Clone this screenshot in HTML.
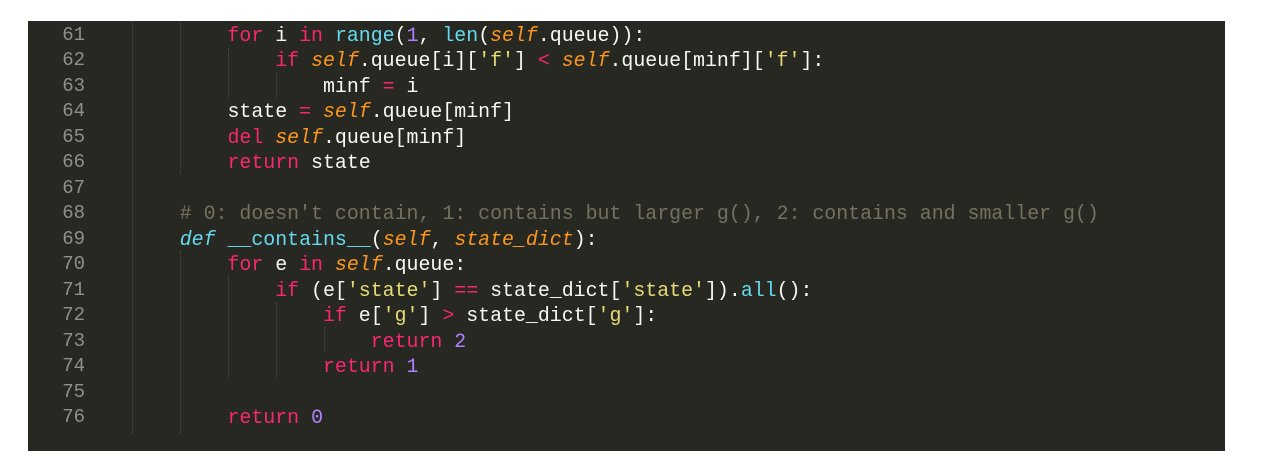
<!DOCTYPE html>
<html><head><meta charset="utf-8"><style>
body{margin:0;background:#fff;width:1270px;height:468px;overflow:hidden;position:relative}
#p{position:absolute;left:28px;top:21px;width:1197px;height:430px;background:#272822}
.l{position:absolute;left:0;height:25px;line-height:25px;font-family:"Liberation Mono",monospace;font-size:19.9px;color:#f8f8f2;white-space:pre}
.n{position:absolute;width:57px;text-align:right;color:#8f908a;font-family:"Liberation Mono",monospace;font-size:19px;line-height:25px}
.c{position:absolute;left:104px}
.k{color:#f92672}.b{color:#66d9ef}.s{color:#fd971f;font-style:italic}.m{color:#ae81ff}.q{color:#e6db74}.cm{color:#75715e}.d{color:#66d9ef;font-style:italic}
.g{position:absolute;width:0;border-left:1px dotted #4a4b44}
</style></head><body><div id="p">
<div class="g" style="left:104px;top:0;height:412px"></div>
<div class="g" style="left:152px;top:0;height:153px"></div>
<div class="g" style="left:200px;top:27px;height:50px"></div>
<div class="g" style="left:248px;top:52px;height:25px"></div>
<div class="g" style="left:152px;top:230px;height:182px"></div>
<div class="g" style="left:200px;top:255px;height:102px"></div>
<div class="g" style="left:248px;top:281px;height:76px"></div>
<div class="g" style="left:296px;top:306px;height:25px"></div>
</div>
<div id="t" style="position:absolute;left:28px;top:23px">
<div class="l" style="top:0"><span class="n">61</span><span class="c">        <span class="k">for</span> i <span class="k">in</span> <span class="b">range</span>(<span class="m">1</span>, <span class="b">len</span>(<span class="s">self</span>.queue)):</span></div>
<div class="l" style="top:25.47px"><span class="n">62</span><span class="c">            <span class="k">if</span> <span class="s">self</span>.queue[i][<span class="q">'f'</span>] <span class="k">&lt;</span> <span class="s">self</span>.queue[minf][<span class="q">'f'</span>]:</span></div>
<div class="l" style="top:50.94px"><span class="n">63</span><span class="c">                minf <span class="k">=</span> i</span></div>
<div class="l" style="top:76.41px"><span class="n">64</span><span class="c">        state <span class="k">=</span> <span class="s">self</span>.queue[minf]</span></div>
<div class="l" style="top:101.88px"><span class="n">65</span><span class="c">        <span class="k">del</span> <span class="s">self</span>.queue[minf]</span></div>
<div class="l" style="top:127.35px"><span class="n">66</span><span class="c">        <span class="k">return</span> state</span></div>
<div class="l" style="top:152.82px"><span class="n">67</span></div>
<div class="l" style="top:178.29px"><span class="n">68</span><span class="c">    <span class="cm"># 0: doesn't contain, 1: contains but larger g(), 2: contains and smaller g()</span></span></div>
<div class="l" style="top:203.76px"><span class="n">69</span><span class="c">    <span class="d">def</span> <span class="b">__contains__</span>(<span class="s">self</span>, <span class="s">state_dict</span>):</span></div>
<div class="l" style="top:229.23px"><span class="n">70</span><span class="c">        <span class="k">for</span> e <span class="k">in</span> <span class="s">self</span>.queue:</span></div>
<div class="l" style="top:254.7px"><span class="n">71</span><span class="c">            <span class="k">if</span> (e[<span class="q">'state'</span>] <span class="k">==</span> state_dict[<span class="q">'state'</span>]).<span class="b">all</span>():</span></div>
<div class="l" style="top:280.17px"><span class="n">72</span><span class="c">                <span class="k">if</span> e[<span class="q">'g'</span>] <span class="k">&gt;</span> state_dict[<span class="q">'g'</span>]:</span></div>
<div class="l" style="top:305.64px"><span class="n">73</span><span class="c">                    <span class="k">return</span> <span class="m">2</span></span></div>
<div class="l" style="top:331.11px"><span class="n">74</span><span class="c">                <span class="k">return</span> <span class="m">1</span></span></div>
<div class="l" style="top:356.58px"><span class="n">75</span></div>
<div class="l" style="top:382.05px"><span class="n">76</span><span class="c">        <span class="k">return</span> <span class="m">0</span></span></div>
</div>
</body></html>
